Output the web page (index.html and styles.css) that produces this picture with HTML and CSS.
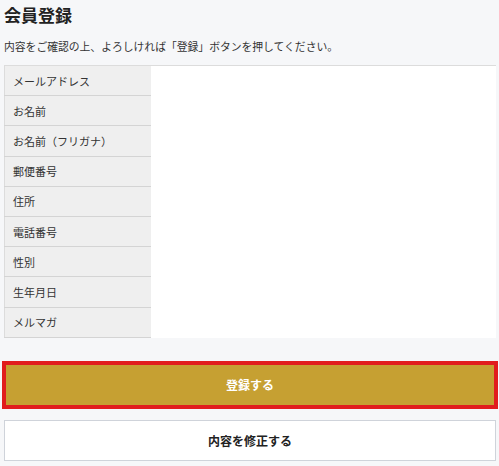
FILE: index.html
```html
<!DOCTYPE html>
<html lang="ja">
<head>
    <meta charset="UTF-8">
    <meta name="viewport" content="width=device-width, initial-scale=1.0">
    <title>会員登録</title>
    <link rel="stylesheet" href="styles.css">
</head>
<body>
    <div class="container">
        <h1 class="page-title">会員登録</h1>
        <p class="lead">内容をご確認の上、よろしければ「登録」ボタンを押してください。</p>

        <table class="confirm-table">
            <tr><th>メールアドレス</th><td></td></tr>
            <tr><th>お名前</th><td></td></tr>
            <tr><th>お名前（フリガナ）</th><td></td></tr>
            <tr><th>郵便番号</th><td></td></tr>
            <tr><th>住所</th><td></td></tr>
            <tr><th>電話番号</th><td></td></tr>
            <tr><th>性別</th><td></td></tr>
            <tr><th>生年月日</th><td></td></tr>
            <tr><th>メルマガ</th><td></td></tr>
        </table>

        <div class="actions">
            <button type="submit" class="btn btn-submit">登録する</button>
            <button type="button" class="btn btn-back">内容を修正する</button>
        </div>
    </div>
</body>
</html>
```

FILE: styles.css
```css
body {
    font-family: "Noto Sans CJK JP", "Noto Sans", sans-serif;
    background-color: #f6f7f9;
    color: #333;
    margin: 0;
    padding: 0;
}

.container {
    padding: 0 3px 0 4px;
}

.page-title {
    font-size: 17px;
    font-weight: bold;
    line-height: 24px;
    margin: 3px 0 0;
    color: #222;
}

.lead {
    font-size: 10.8px;
    line-height: 16px;
    margin: 11px 0 0;
    color: #333;
}

.confirm-table {
    width: 100%;
    margin-top: 11px;
    border-collapse: collapse;
    background-color: #fff;
    border-top: 1px solid #dcdcdc;
}

.confirm-table th {
    width: 146px;
    text-align: left;
    font-weight: normal;
    font-size: 11px;
    color: #333;
    background-color: #efefef;
    border-left: 1px solid #dcdcdc;
    border-bottom: 1px solid #d4d4d4;
    padding: 0 0 0 8px;
    height: 30.2px;
    box-sizing: border-box;
}

.confirm-table td {
    padding: 0;
}

.actions {
    margin-top: 23px;
    display: flex;
    flex-direction: column;
    gap: 11px;
}

.btn {
    font-family: inherit;
    font-size: 12px;
    font-weight: bold;
    cursor: pointer;
    display: block;
    width: 100%;
}

.btn-submit {
    margin: 0 -2px;
    width: calc(100% + 4px);
    height: 48px;
    background-color: #c6a032;
    color: #fff;
    border: 4px solid #e11d1d;
}

.btn-back {
    height: 41px;
    background-color: #fff;
    color: #222;
    border: 1px solid #cfd3da;
}
```
